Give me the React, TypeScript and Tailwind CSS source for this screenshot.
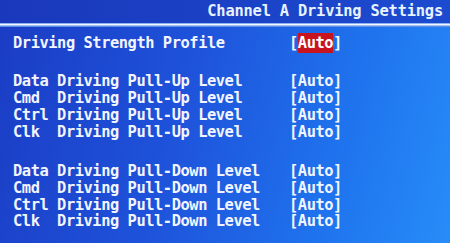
const pullUp = ['Data', 'Cmd', 'Ctrl', 'Clk'];

function Row({ label, value, active }: { label: string; value: string; active?: boolean }) {
  return (
    <div className="flex h-[16.7px] items-center">
      <div className="w-[276px] whitespace-pre">{label}</div>
      <div className="whitespace-pre">
        [<span className={active ? 'bg-[#c8141e] text-white py-[1px]' : ''}>{value}</span>]
      </div>
    </div>
  );
}

export default function App() {
  return (
    <div
      className="w-[450px] h-[243px] overflow-hidden bg-[linear-gradient(105deg,#1b3cc4_0%,#1e52da_40%,#1f74ee_75%,#278cf8_100%)] text-[#f2f5ff] font-bold text-[15.4px] tracking-[-0.45px]"
      style={{ fontFamily: '"DejaVu Sans Mono", "Liberation Mono", monospace' }}
    >
      {/* title bar */}
      <div className="h-[23px] flex items-center justify-end pr-[7px] bg-[linear-gradient(90deg,#1a38bb,#1c4bd0)]">
        <span className="text-[#e6f3ff] whitespace-pre tracking-[-0.2px]">Channel A Driving Settings</span>
      </div>
      <div className="h-[1px] bg-[#8fb2f0]" />
      <div className="h-[1px] bg-[#f4f7ff]" />
      <div className="h-[1px] bg-[#9ec0f4]" />
      <div className="h-[1px] bg-[#5f8ee8]" />

      <div className="pl-[13px] pt-[8px]">
        <Row label="Driving Strength Profile" value="Auto" active />

        <div className="mt-[22px]">
          {pullUp.map((n) => (
            <Row key={n} label={`${n.padEnd(4, ' ')} Driving Pull-Up Level`} value="Auto" />
          ))}
        </div>

        <div className="mt-[23px]">
          {pullUp.map((n) => (
            <Row key={n} label={`${n.padEnd(4, ' ')} Driving Pull-Down Level`} value="Auto" />
          ))}
        </div>
      </div>
    </div>
  );
}
